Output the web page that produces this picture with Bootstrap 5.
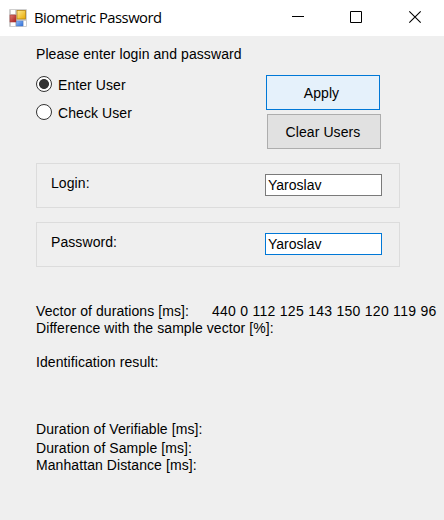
<!DOCTYPE html>
<html lang="en">
<head>
<meta charset="utf-8">
<meta name="viewport" content="width=device-width, initial-scale=1">
<title>Biometric Password</title>
<link href="https://cdn.jsdelivr.net/npm/bootstrap@5.3.0/dist/css/bootstrap.min.css" rel="stylesheet">
<style>
body{background:#efefef;color:#000;font:14px/17px "Liberation Sans",Arial,sans-serif;letter-spacing:.08px;overflow:hidden;white-space:nowrap}
.titlebar{height:36px;background:#fff;padding-left:9px}
.title-text{font:14.8px/20px "Open Sans","Noto Sans",sans-serif;letter-spacing:-.52px;margin-left:7px;padding-bottom:2px}
.win-btn{width:58px;height:36px}
.form-body{padding:10px 0 0 36px}
.top-row{height:100px;padding-top:12px}
.options{width:230px;padding-top:1px}
.option{height:28px;gap:6px}
.option-label{padding-top:1px}
.option input.form-check-input{width:16px;height:16px;margin:0;border:1px solid #333;background-color:#fff;box-shadow:none}
.option input.form-check-input:checked{background-image:radial-gradient(circle,#333 0 4.6px,transparent 5.3px)}
.win-push{width:114px;height:35px;border:1px solid #adadad;border-radius:0;background:#e1e1e1;font-size:inherit;line-height:17px;padding:1px 0 0;letter-spacing:inherit;color:#000}
.win-push.active-push{background:#e5f1fb;border-color:#0078d7;padding-right:3px}
.second-push{margin:4px 0 0 1px;padding-right:2px}
.group{width:364px;height:45px;border:1px solid #dcdcdc;margin-bottom:14px;padding:10px 17px 0 14px}
.group label{padding-top:1px}
.group input.form-control{width:117px;height:22px;min-height:0;border:1px solid #7a7a7a;border-radius:0;padding:0 0 1px 2px;font-size:14px;line-height:17px;letter-spacing:0;color:#000;box-shadow:none}
.group input.current{border-color:#0078d7}
.results{padding-top:22px}
.numbers{letter-spacing:.27px;margin-left:23px}
.gap-line{margin-top:17px}
.durations{margin-top:50px}
.sample-line{margin-top:2px}
</style>
</head>
<body>
<header class="titlebar d-flex align-items-center">
  <svg width="18" height="18" viewBox="0 0 18 18" aria-hidden="true">
    <defs>
      <linearGradient id="gy" x2="1" y2="1"><stop stop-color="#ffeb91"/><stop offset="1" stop-color="#e8a900"/></linearGradient>
      <linearGradient id="gr" x2="1" y2="1"><stop stop-color="#e07a70"/><stop offset="1" stop-color="#a61c1c"/></linearGradient>
      <linearGradient id="gb" x2="1" y2="1"><stop stop-color="#8db8f5"/><stop offset="1" stop-color="#2f6fd8"/></linearGradient>
    </defs>
    <rect width="18" height="18" rx="1" fill="#cfcfcf"/>
    <path d="M2 1h4v4H2zM2 13h4v4H2zM14.500 12h2.500v5h-2.500z" fill="#fff"/>
    <rect x="1" y="6" width="6" height="7" fill="url(#gr)" stroke="#a83a36" stroke-width=".6"/>
    <rect x="8" y="1.500" width="8.500" height="8.500" fill="url(#gy)" stroke="#b98512" stroke-width=".8"/>
    <rect x="7.500" y="12" width="6.500" height="5" fill="url(#gb)" stroke="#4a78c8" stroke-width=".5"/>
  </svg>
  <span class="title-text">Biometric Password</span>
  <div class="d-flex ms-auto">
    <svg class="win-btn" viewBox="0 0 58 36"><path d="M22 16.500h12" stroke="#000"/></svg>
    <svg class="win-btn" viewBox="0 0 58 36"><path d="M22.500 11.500h11v11h-11z" fill="none" stroke="#000"/></svg>
    <svg class="win-btn" viewBox="0 0 58 36"><path d="M23.300 11.300l11.400 11.400M34.700 11.300L23.300 22.700" fill="none" stroke="#000" stroke-width="1.100"/></svg>
  </div>
</header>
<main class="form-body">
  <div>Please enter login and passward</div>
  <div class="top-row d-flex">
    <div class="options">
      <div class="option d-flex"><input class="form-check-input mt-0" type="radio" name="mode" id="enter" checked><label for="enter" class="option-label">Enter User</label></div>
      <div class="option d-flex"><input class="form-check-input mt-0" type="radio" name="mode" id="check"><label for="check" class="option-label">Check User</label></div>
    </div>
    <div class="d-flex flex-column">
      <button class="btn win-push active-push" type="button">Apply</button>
      <button class="btn win-push second-push" type="button">Clear Users</button>
    </div>
  </div>
  <div class="group d-flex justify-content-between align-items-start">
    <label for="login">Login:</label><input id="login" class="form-control" value="Yaroslav">
  </div>
  <div class="group d-flex justify-content-between align-items-start">
    <label for="pass">Password:</label><input id="pass" class="form-control current" value="Yaroslav">
  </div>
  <div class="results">
    <div class="d-flex"><span>Vector of durations [ms]:</span><span class="numbers">440 0 112 125 143 150 120 119 96</span></div>
    <div>Difference with the sample vector [%]:</div>
    <div class="gap-line">Identification result:</div>
    <div class="durations">Duration of Verifiable [ms]:</div>
    <div class="sample-line">Duration of Sample [ms]:</div>
    <div>Manhattan Distance [ms]:</div>
  </div>
</main>
<script src="https://cdn.jsdelivr.net/npm/bootstrap@5.3.0/dist/js/bootstrap.bundle.min.js"></script>
</body>
</html>
